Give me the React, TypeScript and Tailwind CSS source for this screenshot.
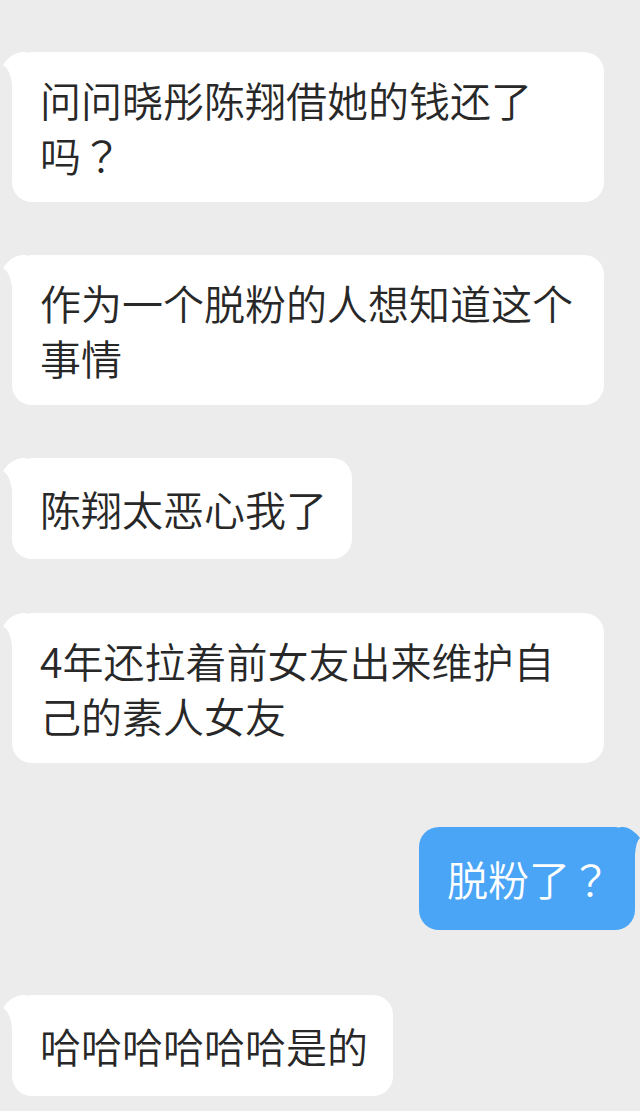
import React from "react";

type Msg = { text: string; mine?: boolean; mt: string; py: string };

const messages: Msg[] = [
  { text: "问问晓彤陈翔借她的钱还了吗？", mt: "mt-[52px]", py: "py-[20px]" },
  { text: "作为一个脱粉的人想知道这个事情", mt: "mt-[53px]", py: "py-[20px]" },
  { text: "陈翔太恶心我了", mt: "mt-[53px]", py: "py-[23px]" },
  { text: "4年还拉着前女友出来维护自己的素人女友", mt: "mt-[54px]", py: "py-[20px]" },
  { text: "脱粉了？", mine: true, mt: "mt-[64px]", py: "py-[24px]" },
  { text: "哈哈哈哈哈哈是的", mt: "mt-[65px]", py: "py-[23px]" },
];

// full-width question mark centred like the reference (JP form)
const renderText = (text: string) =>
  text.split(/(？)/).map((part, i) =>
    part === "？" ? (
      <span key={i} style={{ fontFamily: '"Noto Sans CJK JP", sans-serif' }}>
        ？
      </span>
    ) : (
      <React.Fragment key={i}>{part}</React.Fragment>
    )
  );

const LeftTail = () => (
  <svg
    className="absolute left-[-10px] top-0"
    width="24"
    height="34"
    viewBox="0 0 24 34"
  >
    <path d="M20 0 Q9 1 1 13 Q8 17 10 32 L24 32 L24 0 Z" fill="#ffffff" />
  </svg>
);

const RightTail = () => (
  <svg
    className="absolute right-[-5px] top-0"
    width="20"
    height="30"
    viewBox="0 0 20 30"
  >
    <path d="M4 0 Q12 1 20 11 Q16 14 15 28 L0 28 L0 0 Z" fill="#4aa5f6" />
  </svg>
);

const Bubble = ({ msg }: { msg: Msg }) => {
  if (msg.mine) {
    return (
      <div className={`${msg.mt} self-end mr-[5px] relative max-w-[592px]`}>
        <RightTail />
        <div
          className={`relative bg-[#4aa5f6] text-white rounded-[20px] pl-[28px] pr-[24px] ${msg.py} text-[41px] leading-[55px] font-[350]`}
        >
          {renderText(msg.text)}
        </div>
      </div>
    );
  }
  return (
    <div className={`${msg.mt} self-start ml-[12px] relative max-w-[592px]`}>
      <LeftTail />
      <div
        className={`relative bg-white text-[#282828] rounded-[20px] pl-[28px] pr-[25px] ${msg.py} text-[41px] leading-[55px] font-[350]`}
      >
        {renderText(msg.text)}
      </div>
    </div>
  );
};

export default function App() {
  return (
    <div
      className="w-[640px] h-[1111px] overflow-hidden bg-[#ececec] flex flex-col"
      style={{ fontFamily: '"Noto Sans CJK SC", "Noto Sans", sans-serif' }}
    >
      {messages.map((m, i) => (
        <Bubble key={i} msg={m} />
      ))}
    </div>
  );
}
